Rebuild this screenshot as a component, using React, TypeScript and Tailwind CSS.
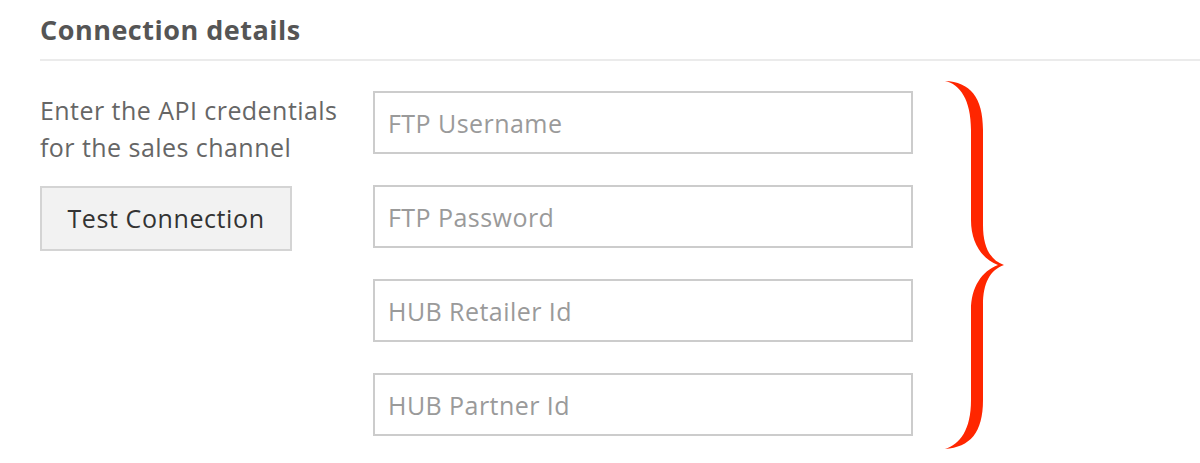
export default function App() {
  const fields = ["FTP Username", "FTP Password", "HUB Retailer Id", "HUB Partner Id"];
  return (
    <div className="w-[1200px] h-[463px] bg-white overflow-hidden font-['Open_Sans',sans-serif]">
      <div className="pl-[40px] pt-[13px]">
        <h2 className="text-[27px] leading-[34px] font-bold tracking-[0.5px] text-[#555555]">Connection details</h2>
        <div className="mt-[12px] h-[2px] bg-[#ebebeb]" />
        <div className="flex items-start mt-[30px]">
          <div className="w-[333px] shrink-0">
            <p className="text-[25px] leading-[37px] tracking-[0.45px] text-[#666666] mt-[1px]">
              Enter the API credentials
              <br />
              for the sales channel
            </p>
            <button className="mt-[20px] w-[252px] h-[65px] border-2 border-[#d4d4d4] bg-[#f2f2f2] text-[25px] tracking-[0.6px] text-[#333333]">
              Test Connection
            </button>
          </div>
          <div className="flex flex-col gap-[31px] w-[540px] shrink-0">
            {fields.map((f) => (
              <input
                key={f}
                placeholder={f}
                className="h-[63px] w-full border-2 border-[#cccccc] px-[13px] text-[25px] tracking-[0.45px] text-[#333] placeholder:text-[#9a9a9a] outline-none"
              />
            ))}
          </div>
          <svg width="70" height="380" viewBox="0 0 70 380" className="ml-[27px] -mt-[16px] shrink-0">
            <path
              fill="#ff2600"
              d="M5,6 C30,7 43,22 43,55 L43,150 C43,172 50,185 64,190 C50,195 43,208 43,230 L43,325 C43,358 30,372 5,374 C20,369 31,355 31,325 L31,235 C31,212 42,196 58,190 C42,184 31,168 31,145 L31,55 C31,25 20,9 5,6 Z"
            />
          </svg>
        </div>
      </div>
    </div>
  );
}
